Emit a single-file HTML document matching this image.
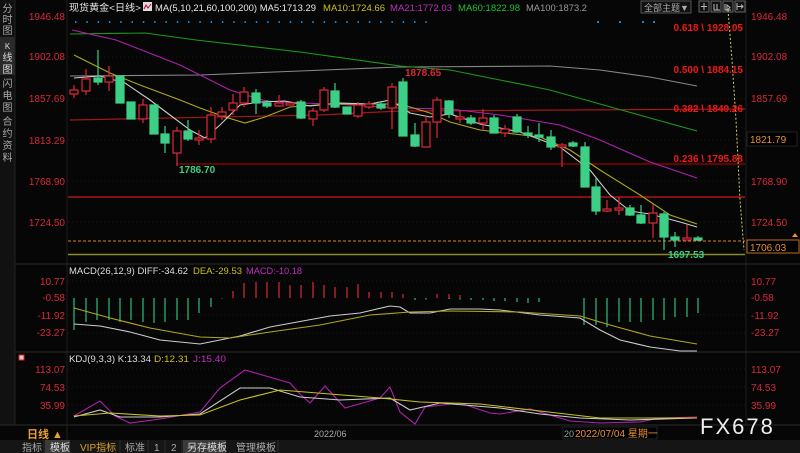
<!DOCTYPE html>
<html><head><meta charset="utf-8"><style>
html,body{margin:0;padding:0;background:#060606;width:800px;height:453px;overflow:hidden}
svg{display:block;font-family:"Liberation Sans","Noto Sans CJK SC",sans-serif}
</style></head><body>
<svg width="800" height="453" viewBox="0 0 800 453" xmlns="http://www.w3.org/2000/svg">
<rect width="800" height="453" fill="#060606"/>
<rect x="0" y="0" width="15" height="425" fill="#111"/>
<rect x="0" y="37" width="15" height="38" fill="#2a2a2a"/>
<g font-size="10" fill="#aaa" text-anchor="middle">
<text x="7.5" y="12">分</text><text x="7.5" y="23">时</text><text x="7.5" y="34">图</text>
<text x="7.5" y="49" fill="#ddd" font-size="8">K</text><text x="7.5" y="61" fill="#ddd">线</text><text x="7.5" y="73" fill="#ddd">图</text>
<text x="7.5" y="87">闪</text><text x="7.5" y="99">电</text><text x="7.5" y="111">图</text>
<text x="7.5" y="125">合</text><text x="7.5" y="137">约</text><text x="7.5" y="149">资</text><text x="7.5" y="161">料</text>
</g>
<line x1="15" y1="0" x2="15" y2="425" stroke="#222"/>
<line x1="67" y1="0" x2="67" y2="425" stroke="#1c1c1c"/>
<line x1="746" y1="0" x2="746" y2="425" stroke="#1c1c1c"/>
<line x1="15" y1="264" x2="800" y2="264" stroke="#2a2a2a"/>
<line x1="15" y1="352" x2="800" y2="352" stroke="#2a2a2a"/>
<line x1="0" y1="425" x2="800" y2="425" stroke="#2a2a2a"/>
<g font-size="10" fill="#d8283a" text-anchor="end">
<text x="65" y="20">1946.48</text><text x="65" y="60">1902.08</text><text x="65" y="102">1857.69</text><text x="65" y="144">1813.29</text><text x="65" y="185">1768.90</text><text x="65" y="226">1724.50</text>
<text x="65" y="285">10.77</text><text x="65" y="301">-0.58</text><text x="65" y="319">-11.92</text><text x="65" y="336">-23.27</text>
<text x="65" y="373">113.07</text><text x="65" y="391">74.53</text><text x="65" y="409">35.99</text>
</g>
<rect x="19" y="355" width="5" height="5" fill="#ccc" stroke="#e02020"/>
<g font-size="10" fill="#d8283a">
<text x="751" y="20">1946.48</text><text x="751" y="60">1902.08</text><text x="751" y="102">1857.69</text><text x="751" y="185">1768.90</text><text x="751" y="226">1724.50</text>
<text x="751" y="285">10.77</text><text x="751" y="301">-0.58</text><text x="751" y="319">-11.92</text><text x="751" y="336">-23.27</text>
<text x="751" y="373">113.07</text><text x="751" y="391">74.53</text><text x="751" y="409">35.99</text>
</g>
<rect x="747" y="132" width="50" height="14" fill="#000" stroke="#222"/>
<text x="750" y="143" font-size="10" fill="#e89030">1821.79</text>
<rect x="747" y="240" width="52" height="13" fill="#000" stroke="#c07020"/>
<text x="750" y="251" font-size="10" fill="#e89030">1706.03</text>
<polygon points="792,237 795,233 798,237" fill="#e89030"/>
<g font-size="9.5">
<text x="69" y="11" fill="#e8e8e8" textLength="72" lengthAdjust="spacingAndGlyphs">现货黄金&lt;日线&gt;</text>
<rect x="143" y="2" width="9" height="9" fill="#ddd"/><path d="M144,9 L146,5 L148,8 L151,4" stroke="#c03" fill="none"/>
<text x="155" y="11" fill="#e8e8e8" textLength="161" lengthAdjust="spacingAndGlyphs">MA(5,10,21,60,100,200) MA5:1713.29</text>
<text x="323" y="11" fill="#c8c020" textLength="62" lengthAdjust="spacingAndGlyphs">MA10:1724.66</text>
<text x="390" y="11" fill="#c030c0" textLength="62" lengthAdjust="spacingAndGlyphs">MA21:1772.03</text>
<text x="458" y="11" fill="#20c030" textLength="62" lengthAdjust="spacingAndGlyphs">MA60:1822.98</text>
<text x="526" y="11" fill="#999" textLength="61" lengthAdjust="spacingAndGlyphs">MA100:1873.2</text>
</g>
<rect x="641" y="1" width="50" height="12" fill="#111" stroke="#555"/>
<text x="644" y="11" font-size="9" fill="#aaa">全部主题▼</text>
<g fill="#111" stroke="#666"><rect x="699" y="1" width="10" height="11"/><rect x="711" y="1" width="10" height="11"/><rect x="723" y="1" width="10" height="11"/><rect x="735" y="1" width="10" height="11"/></g>
<g stroke="#bbb" fill="none"><path d="M704,3v7M701,6.5h6"/><path d="M714,4v6h6M717,4v6"/><path d="M725,4v6h6M727,5l3,2.5l-3,2.5z"/><path d="M737,3v7M737,6.5h6M741,4.5l2,2l-2,2"/></g>
<line x1="75" y1="22" x2="430" y2="22" stroke="#1a7fd0" stroke-width="2" stroke-dasharray="1.5,9.8"/>
<g fill="#1a7fd0"><rect x="597" y="21" width="2" height="2"/><rect x="619" y="21" width="2" height="2"/><rect x="642" y="21" width="2" height="2"/><rect x="653" y="21" width="2" height="2"/></g>
<g stroke="#1a1a1a" stroke-dasharray="1,3"><line x1="68" y1="57" x2="745" y2="57"/><line x1="68" y1="99" x2="745" y2="99"/><line x1="68" y1="140" x2="745" y2="140"/><line x1="68" y1="181" x2="745" y2="181"/><line x1="68" y1="222" x2="745" y2="222"/><line x1="68" y1="281" x2="745" y2="281"/><line x1="68" y1="315" x2="745" y2="315"/><line x1="68" y1="333" x2="745" y2="333"/><line x1="68" y1="369" x2="745" y2="369"/><line x1="68" y1="387" x2="745" y2="387"/><line x1="68" y1="405" x2="745" y2="405"/></g>
<polyline points="70,120 320,115 400,111 745,109" stroke="#a01818" fill="none" stroke-width="1.2"/>
<line x1="176" y1="164" x2="745" y2="164" stroke="#900" stroke-width="1.3"/>
<line x1="68" y1="197" x2="745" y2="197" stroke="#d01818" stroke-width="1.2"/>
<line x1="68" y1="241" x2="745" y2="241" stroke="#e08020" stroke-dasharray="3,2"/>
<line x1="68" y1="254.5" x2="745" y2="254.5" stroke="#8a8a30" stroke-width="1.5"/>
<path d="M728,10 L732,60 L736,120 L740,200 L744,250" stroke="#d0d060" stroke-dasharray="2,2" fill="none"/>
<g font-size="10" font-weight="bold" fill="#f01818" text-anchor="end">
<text x="743" y="31">0.618 \ 1928.05</text><text x="743" y="73">0.500 \ 1884.15</text><text x="743" y="112">0.382 \ 1840.26</text><text x="743" y="162">0.236 \ 1795.88</text>
</g>
<g fill="none" stroke-width="1.1">
<polyline stroke="#888" points="70,76 200,75 300,71 400,67 550,66 600,70 650,77 697,86"/>
<polyline stroke="#1a9a1a" points="70,34 145,33 196,40 300,52 400,66 450,70 500,80 550,90 600,104 650,118 697,131"/>
<polyline stroke="#b020b0" points="72,30 116,40 180,65 230,90 266,101 300,103 335,104 400,108 450,109 500,115 560,125 600,140 650,162 697,178"/>
<polyline stroke="#b0a818" points="74,55 110,73 140,85 180,100 200,108 225,117 245,123 265,117 290,107 330,104 400,104 430,113 450,122 480,130 540,137 570,150 600,170 640,195 670,215 697,224"/>
<polyline stroke="#ccc" points="74,78 100,76 125,83 150,100 170,115 190,130 205,138 220,125 240,105 260,102 285,101 310,106 340,103 370,104 390,100 410,113 430,117 450,114 480,124 520,132 560,147 590,170 610,195 630,211 650,214 680,222 697,227"/>
</g>
<g stroke-width="1.2">
<g stroke="#e02838" fill="#060606">
<line x1="74" y1="85" x2="74" y2="98"/><rect x="70" y="90" width="8" height="4"/>
<line x1="86" y1="69" x2="86" y2="95"/><rect x="82" y="79" width="8" height="12"/>
<line x1="109" y1="66" x2="109" y2="91"/><rect x="105" y="76" width="8" height="6"/>
<line x1="143" y1="99" x2="143" y2="123"/><rect x="139" y="105" width="8" height="14"/>
<line x1="177" y1="127" x2="177" y2="166"/><rect x="173" y="131" width="8" height="22"/>
<line x1="199" y1="130" x2="199" y2="145"/><rect x="195" y="138" width="8" height="2"/>
<line x1="211" y1="107" x2="211" y2="143"/><rect x="207" y="115" width="8" height="24"/>
<line x1="222" y1="107" x2="222" y2="120"/><rect x="218" y="112" width="8" height="4"/>
<line x1="233" y1="94" x2="233" y2="115"/><rect x="229" y="103" width="8" height="7"/>
<line x1="244" y1="87" x2="244" y2="107"/><rect x="240" y="92" width="8" height="11"/>
<line x1="279" y1="95" x2="279" y2="107"/><rect x="275" y="103" width="8" height="3"/>
<rect x="286" y="103" width="8" height="2"/>
<line x1="313" y1="108" x2="313" y2="126"/><rect x="309" y="111" width="8" height="8"/>
<line x1="324" y1="87" x2="324" y2="112"/><rect x="320" y="90" width="8" height="20"/>
<line x1="358" y1="102" x2="358" y2="118"/><rect x="354" y="105" width="8" height="11"/>
<line x1="369" y1="101" x2="369" y2="109"/><rect x="365" y="104" width="8" height="3"/>
<line x1="392" y1="83" x2="392" y2="129"/><rect x="388" y="87" width="8" height="21"/>
<line x1="426" y1="115" x2="426" y2="147"/><rect x="422" y="122" width="8" height="25"/>
<line x1="437" y1="97" x2="437" y2="138"/><rect x="433" y="100" width="8" height="22"/>
<line x1="460" y1="110" x2="460" y2="123"/><rect x="456" y="117" width="8" height="2"/>
<line x1="483" y1="109" x2="483" y2="131"/><rect x="479" y="118" width="8" height="5"/>
<line x1="505" y1="125" x2="505" y2="137"/><rect x="501" y="129" width="8" height="4"/>
<line x1="562" y1="143" x2="562" y2="167"/><rect x="558" y="145" width="8" height="2"/>
<line x1="607" y1="200" x2="607" y2="212"/><rect x="603" y="209" width="8" height="2"/>
<line x1="619" y1="197" x2="619" y2="215"/><rect x="615" y="208" width="8" height="2"/>
<line x1="653" y1="204" x2="653" y2="238"/><rect x="649" y="213" width="8" height="10"/>
<line x1="687" y1="225" x2="687" y2="240"/><rect x="683" y="238" width="8" height="2"/>
</g>
<g stroke="#3ccf85" fill="#3ccf85">
<line x1="98" y1="50" x2="98" y2="85"/><rect x="94" y="78" width="8" height="4"/>
<rect x="116" y="76" width="8" height="27"/>
<rect x="127" y="102" width="8" height="17"/>
<rect x="150" y="105" width="8" height="29"/>
<line x1="165" y1="126" x2="165" y2="153"/><rect x="161" y="134" width="8" height="9"/>
<line x1="188" y1="120" x2="188" y2="141"/><rect x="184" y="131" width="8" height="8"/>
<line x1="256" y1="89" x2="256" y2="114"/><rect x="252" y="93" width="8" height="10"/>
<line x1="267" y1="100" x2="267" y2="108"/><rect x="263" y="103" width="8" height="3"/>
<line x1="301" y1="100" x2="301" y2="119"/><rect x="297" y="102" width="8" height="16"/>
<line x1="335" y1="83" x2="335" y2="108"/><rect x="331" y="91" width="8" height="16"/>
<rect x="343" y="107" width="8" height="7"/>
<line x1="381" y1="102" x2="381" y2="110"/><rect x="377" y="104" width="8" height="4"/>
<line x1="403" y1="78" x2="403" y2="136"/><rect x="399" y="82" width="8" height="54"/>
<line x1="415" y1="123" x2="415" y2="147"/><rect x="411" y="135" width="8" height="11"/>
<line x1="449" y1="100" x2="449" y2="118"/><rect x="445" y="101" width="8" height="13"/>
<line x1="471" y1="115" x2="471" y2="125"/><rect x="467" y="118" width="8" height="5"/>
<line x1="494" y1="115" x2="494" y2="133"/><rect x="490" y="118" width="8" height="15"/>
<line x1="517" y1="114" x2="517" y2="133"/><rect x="513" y="117" width="8" height="15"/>
<line x1="528" y1="126" x2="528" y2="138"/><rect x="524" y="133" width="8" height="2"/>
<line x1="539" y1="123" x2="539" y2="142"/><rect x="535" y="135" width="8" height="2"/>
<line x1="551" y1="130" x2="551" y2="150"/><rect x="547" y="137" width="8" height="10"/>
<line x1="573" y1="141" x2="573" y2="147"/><rect x="569" y="143" width="8" height="3"/>
<line x1="585" y1="142" x2="585" y2="187"/><rect x="581" y="147" width="8" height="40"/>
<line x1="596" y1="178" x2="596" y2="215"/><rect x="592" y="187" width="8" height="24"/>
<line x1="630" y1="205" x2="630" y2="216"/><rect x="626" y="208" width="8" height="7"/>
<line x1="641" y1="205" x2="641" y2="224"/><rect x="637" y="215" width="8" height="8"/>
<line x1="664" y1="212" x2="664" y2="250"/><rect x="660" y="214" width="8" height="23"/>
<line x1="675" y1="232" x2="675" y2="247"/><rect x="671" y="237" width="8" height="3"/>
<line x1="698" y1="236" x2="698" y2="241"/><rect x="694" y="238" width="8" height="2"/>
</g>
</g>
<g font-size="10" font-weight="bold">
<text x="405" y="76" fill="#d82838">1878.65</text>
<text x="179" y="173" fill="#3ccf85">1786.70</text>
<text x="668" y="258" fill="#3ccf85">1697.53</text>
</g>
<g font-size="9.5"><text x="69" y="274" fill="#ddd" textLength="119" lengthAdjust="spacingAndGlyphs">MACD(26,12,9) DIFF:-34.62</text><text x="193" y="274" fill="#c8c020" textLength="49" lengthAdjust="spacingAndGlyphs">DEA:-29.53</text><text x="246" y="274" fill="#c030c0" textLength="56" lengthAdjust="spacingAndGlyphs">MACD:-10.18</text></g>
<g stroke-width="1.2">
<path stroke="#2fbf7a" d="M74,298V330M86,298V322M97,298V320M109,298V320M120,298V322M131,298V320M143,298V322M154,298V323M165,298V322M177,298V320M188,298V320M199,298V313M211,298V307M222,298V298.5M415,298V300M426,298V299.5M449,298V299M460,298V299.5M471,298V300M483,298V300M494,298V301M505,298V301M517,298V302M528,298V303M539,298V302M584,298V325M596,298V325M607,298V327M619,298V322M630,298V322M641,298V322M653,298V320M664,298V320M675,298V317M687,298V317M698,298V313"/>
<path stroke="#d82838" d="M233,298V291M244,298V283M256,298V282M267,298V282M279,298V282M290,298V285M301,298V285M313,298V282M324,298V285M335,298V287M347,298V287M358,298V284M369,298V292M381,298V292M392,298V292M403,298V294M437,298V294M449,298V294M460,298V295"/>
</g>
<polyline fill="none" stroke="#ccc" stroke-width="1.1" points="74,324 100,326 130,332 160,340 200,344 240,336 270,327 330,316 360,313 390,306 400,307 410,313 430,313 450,309 480,309 500,310 540,315 580,318 600,330 620,340 650,347 680,351 697,351"/>
<polyline fill="none" stroke="#b0a818" stroke-width="1.1" points="74,308 110,318 150,328 200,337 230,338 270,332 320,325 370,315 410,312 450,311 520,312 580,316 610,325 650,336 697,344"/>
<g font-size="9.5"><text x="69" y="362" fill="#ddd" textLength="82" lengthAdjust="spacingAndGlyphs">KDJ(9,3,3) K:13.34</text><text x="154" y="362" fill="#c8c020" textLength="35" lengthAdjust="spacingAndGlyphs">D:12.31</text><text x="193" y="362" fill="#c030c0" textLength="33" lengthAdjust="spacingAndGlyphs">J:15.40</text></g>
<polyline fill="none" stroke="#b020b0" stroke-width="1.1" points="74,416 100,401 115,416 130,423 160,419 200,412 220,388 245,370 290,383 300,394 310,403 325,386 345,408 380,398 390,387 400,412 415,424 425,407 460,403 490,413 500,414 530,409 570,421 600,423 640,422 660,418 697,417"/>
<polyline fill="none" stroke="#ccc" stroke-width="1.1" points="74,417 100,410 120,417 160,417 200,414 240,388 270,388 300,397 340,400 390,398 410,410 440,403 500,408 540,414 580,418 630,420 697,418"/>
<polyline fill="none" stroke="#c8c020" stroke-width="1.1" points="74,416 110,413 160,416 200,415 240,400 280,390 330,394 380,398 420,402 480,404 540,411 600,418 697,418"/>
<text x="700" y="434" font-size="22" fill="#eee" letter-spacing="2">FX678</text>
<text x="27" y="438" font-size="11" fill="#e8a030" font-weight="bold">日线 ▲</text>
<line x1="67" y1="425" x2="67" y2="440" stroke="#222"/>
<text x="314" y="437" font-size="9" fill="#aaa">2022/06</text>
<rect x="563" y="427" width="94" height="12" fill="#000" stroke="#222"/>
<text x="564" y="437" font-size="9" fill="#8aa">20</text>
<text x="575" y="437" font-size="10" fill="#e89030">2022/07/04 星期一</text>
<rect x="0" y="440" width="800" height="13" fill="#151515"/>
<rect x="45" y="440" width="25" height="13" fill="#3a3a3a"/>
<rect x="183" y="440" width="43" height="13" fill="#3a3a3a"/>
<g font-size="10" fill="#aaa">
<text x="22" y="451">指标</text><text x="50" y="451" fill="#ddd">模板</text><text x="80" y="451" fill="#d8a030">VIP指标</text><text x="125" y="451">标准</text><text x="154" y="451">1</text><text x="171" y="451">2</text><text x="187" y="451" fill="#ddd">另存模板</text><text x="236" y="451">管理模板</text>
</g>
<g stroke="#2a2a2a"><line x1="44" y1="440" x2="44" y2="453"/><line x1="120" y1="440" x2="120" y2="453"/><line x1="148" y1="440" x2="148" y2="453"/><line x1="165" y1="440" x2="165" y2="453"/><line x1="182" y1="440" x2="182" y2="453"/><line x1="278" y1="440" x2="278" y2="453"/></g>
</svg>
</body></html>
